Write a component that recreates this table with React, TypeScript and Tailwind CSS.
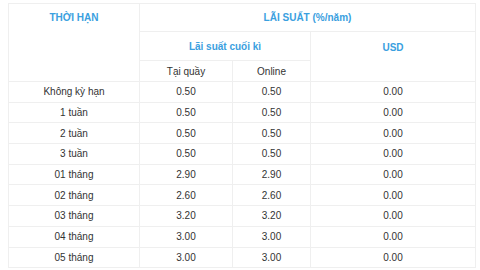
import React from "react";

const rows: [string, string, string, string][] = [
    ["Không kỳ hạn", "0.50", "0.50", "0.00"],
    ["1 tuần", "0.50", "0.50", "0.00"],
    ["2 tuần", "0.50", "0.50", "0.00"],
    ["3 tuần", "0.50", "0.50", "0.00"],
    ["01 tháng", "2.90", "2.90", "0.00"],
    ["02 tháng", "2.60", "2.60", "0.00"],
    ["03 tháng", "3.20", "3.20", "0.00"],
    ["04 tháng", "3.00", "3.00", "0.00"],
    ["05 tháng", "3.00", "3.00", "0.00"],
];

export default function App() {
    return (
        <div className="w-[480px] h-[270px] overflow-hidden bg-white pl-[8px] pt-[3px] font-['Liberation_Sans',Arial,sans-serif] text-[10px]">
            <table className="border-collapse table-fixed w-[467px]">
                <colgroup>
                    <col className="w-[131px]" />
                    <col className="w-[93px]" />
                    <col className="w-[78px]" />
                    <col className="w-[165px]" />
                </colgroup>
                <thead className="text-[#3aa0e0] font-bold">
                    <tr className="h-[28px]">
                        <th rowSpan={3} className="border border-[#efefef] align-top pt-[6px] font-bold">
                            THỜI HẠN
                        </th>
                        <th colSpan={3} className="border border-[#efefef] font-bold pb-[1px]">
                            LÃI SUẤT (%/năm)
                        </th>
                    </tr>
                    <tr className="h-[29px]">
                        <th colSpan={2} className="border border-[#efefef] font-bold">
                            Lãi suất cuối kì
                        </th>
                        <th rowSpan={2} className="border border-[#efefef] align-top pt-[8px] font-bold">
                            USD
                        </th>
                    </tr>
                    <tr className="h-[21px] text-[#333333]">
                        <th className="border border-[#efefef] font-normal">Tại quầy</th>
                        <th className="border border-[#efefef] font-normal">Online</th>
                    </tr>
                </thead>
                <tbody className="text-[#333333] text-center">
                    {rows.map((r) => (
                        <tr key={r[0]} className="h-[20.7px]">
                            {r.map((c, i) => (
                                <td key={i} className="border border-[#efefef] p-0">
                                    {c}
                                </td>
                            ))}
                        </tr>
                    ))}
                </tbody>
            </table>
        </div>
    );
}
